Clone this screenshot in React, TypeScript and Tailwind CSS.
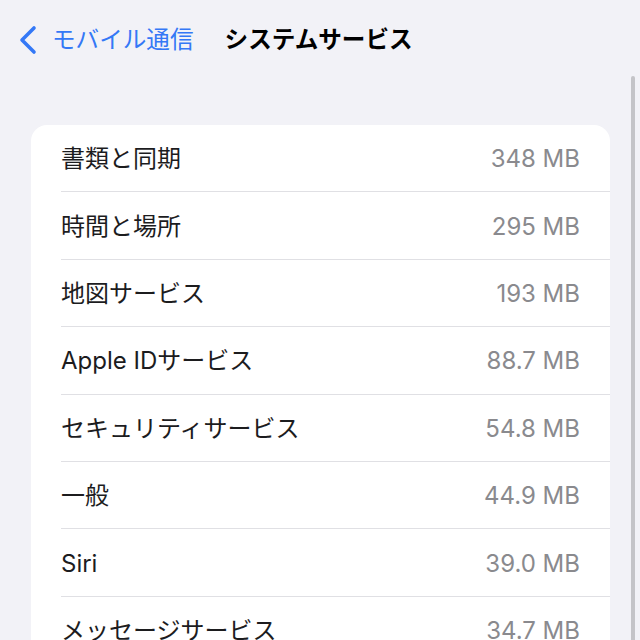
import React from 'react';

interface ServiceRow {
  name: string;
  size: string;
}

const rows: ServiceRow[] = [
  { name: '書類と同期', size: '348 MB' },
  { name: '時間と場所', size: '295 MB' },
  { name: '地図サービス', size: '193 MB' },
  { name: 'Apple IDサービス', size: '88.7 MB' },
  { name: 'セキュリティサービス', size: '54.8 MB' },
  { name: '一般', size: '44.9 MB' },
  { name: 'Siri', size: '39.0 MB' },
  { name: 'メッセージサービス', size: '34.7 MB' },
];

export default function App() {
  return (
    <div
      className="relative h-[640px] w-[640px] overflow-hidden bg-[#f2f2f7]"
      style={{ fontFamily: 'Inter, "Noto Sans CJK JP", sans-serif' }}
    >
      {/* Nav bar */}
      <div className="flex h-[80px] items-center pl-[17px]">
        <svg width="24" height="32" viewBox="0 0 24 32" className="mr-[11px]">
          <path
            d="M17 4 L5 16 L17 28"
            fill="none"
            stroke="#3478f6"
            strokeWidth="3.6"
            strokeLinecap="round"
            strokeLinejoin="round"
          />
        </svg>
        <span className="text-[23.6px] leading-none text-[#3478f6]">モバイル通信</span>
        <span className="ml-[31px] text-[23.6px] font-bold leading-none text-black">システムサービス</span>
      </div>

      {/* Card */}
      <div className="ml-[31px] mt-[45px] w-[579px] overflow-hidden rounded-[16px] bg-white">
        {rows.map((row, i) => (
          <div key={row.name} className="pl-[30px]">
            {i > 0 && <div className="h-px bg-[#e0e0e4]" />}
            <div className="flex h-[66.4px] items-center justify-between pr-[30px] pt-[2px]">
              <span className="text-[24px] text-[#1c1c1e]">{row.name}</span>
              <span className="text-[24px] text-[#8a8a8e]">{row.size}</span>
            </div>
          </div>
        ))}
      </div>

      {/* Scroll indicator */}
      <div className="absolute right-[5px] top-[76px] h-[600px] w-[4px] rounded-full bg-[#c4c4c8]" />
    </div>
  );
}
